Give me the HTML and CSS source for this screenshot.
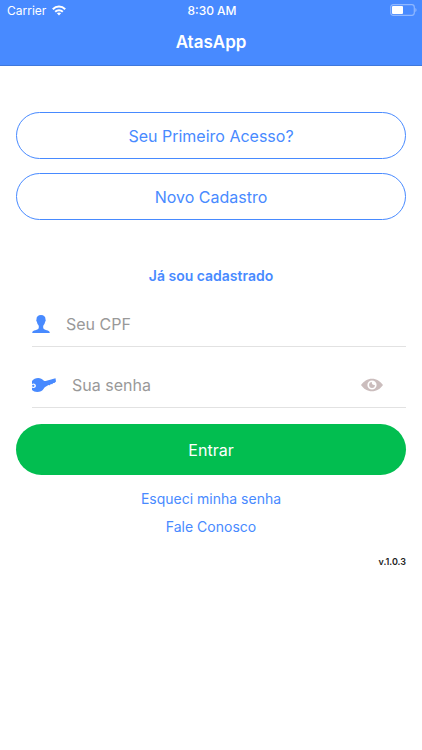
FILE: index.html
```html
<!DOCTYPE html>
<html lang="pt-BR">
<head>
  <meta charset="UTF-8">
  <meta name="viewport" content="width=device-width, initial-scale=1.0">
  <title>AtasApp</title>
  <link rel="stylesheet" href="styles.css">
</head>
<body>

  <header class="header">
    <!-- Status bar -->
    <div class="status-bar">
      <div class="carrier">
        <span>Carrier</span>
        <svg width="14" height="11" viewBox="0 0 14 11">
          <g fill="none" stroke="#fff" stroke-width="2">
            <path d="M0.8 4.3C4.3 0.7 9.7 0.7 13.2 4.3"/>
            <path d="M3.2 6.8C5.3 4.7 8.7 4.7 10.8 6.8"/>
          </g>
          <path fill="#fff" d="M4.9 8.3C6 7.3 8 7.3 9.1 8.3L7 10.4Z"/>
        </svg>
      </div>
      <span class="time">8:30 AM</span>
      <div class="battery">
        <svg width="27" height="12" viewBox="0 0 27 12">
          <rect x="0.7" y="0.7" width="23.6" height="10.6" rx="2.5" fill="none" stroke="#8fb7ff" stroke-width="1.2"/>
          <rect x="2" y="2" width="11" height="8" rx="1" fill="#fff"/>
          <path d="M25.3 4C27 4.6 27 7.4 25.3 8Z" fill="#8fb7ff"/>
        </svg>
      </div>
    </div>
    <h1>AtasApp</h1>
  </header>

  <main class="content">
    <div class="access">
      <button type="button" class="btn btn-outline">Seu Primeiro Acesso?</button>
      <button type="button" class="btn btn-outline">Novo Cadastro</button>
    </div>

    <!-- Login Form -->
    <form id="login-form">
      <h2>Já sou cadastrado</h2>
      <div class="field">
        <label for="cpf" aria-label="Seu CPF">
          <svg width="18" height="18" viewBox="0 0 18 18">
            <path fill="#488aff" d="M9 0C6.2 0 4.3 1.6 4.5 4.4C4.1 4.7 4.2 6.3 4.9 6.8C5.1 8.2 5.7 9.4 6.4 10.1C7 11.3 7 12.8 6.4 13.8C5.4 15.3 .8 15 .3 17.2V18H17.7V17.2C17.2 15 12.6 15.3 11.6 13.8C11 12.8 11 11.3 11.6 10.1C12.3 9.4 12.9 8.2 13.1 6.8C13.8 6.3 13.9 4.7 13.5 4.4C13.7 1.6 11.8 0 9 0Z"/>
          </svg>
        </label>
        <input type="text" id="cpf" placeholder="Seu CPF">
      </div>
      <div class="field">
        <label for="senha" aria-label="Sua senha">
          <svg width="24" height="14" viewBox="0 0 24 14">
            <path fill="#488aff" fill-rule="evenodd" d="M0 3C1.4 1 3.7 0 6.2 0C8.4 0 10.2 1 11.6 2.4C12.5 3.2 13.6 3 14.5 2.7L23.5 .2L24 3.6L22.4 5.1L21.3 4.9L20.1 6.2L18.9 5.9L17.8 7.2L16.5 7.1L14 8.6C12.7 9.3 12.3 9.9 11.7 10.8C10.3 13 8 14 5.2 14C3.1 14 1.2 13.3 0 12ZM0 6.1V9.5C1.5 10.8 3.9 9.8 3.9 7.8C3.9 5.8 1.5 4.8 0 6.1ZM.2 7.1C1.1 6.2 2.5 6.7 2.5 7.8C2.5 8.9 1.1 9.4 .2 8.5Z"/>
          </svg>
        </label>
        <input type="password" id="senha" placeholder="Sua senha">
        <button type="button" class="toggle" aria-label="Mostrar senha">
          <svg width="22" height="14" viewBox="0 0 22 14">
            <path fill="#cbbdbd" fill-rule="evenodd" d="M0 7C2.6 3.2 6.4 .7 11 .7C15.6 .7 19.4 3.2 22 7C19.4 10.8 15.6 13.3 11 13.3C6.4 13.3 2.6 10.8 0 7ZM11 2.4A4.6 4.6 0 1 0 11 11.6A4.6 4.6 0 1 0 11 2.4Z"/>
            <path fill="#cbbdbd" d="M11 4.1C10.4 5.6 11.3 7.2 13.9 7A2.9 2.9 0 1 1 11 4.1Z"/>
          </svg>
        </button>
      </div>
      <button type="submit" class="btn btn-enter">Entrar</button>
    </form>

    <nav class="links">
      <a href="#senha">Esqueci minha senha</a>
      <a href="#contato">Fale Conosco</a>
    </nav>
    <p class="version">v.1.0.3</p>
  </main>

</body>
</html>
```

FILE: styles.css
```css
* { box-sizing: border-box; margin: 0; padding: 0; }

body {
  font-family: Inter, 'Helvetica Neue', Helvetica, Arial, sans-serif;
  background: #fff;
  color: #488aff;
}

svg { display: block; }

/* Header */
.header {
  background: #488aff;
  color: #fff;
  border-bottom: 1px solid #3f78dc;
  text-align: center;
}

.status-bar {
  display: grid;
  grid-template-columns: 1fr auto 1fr;
  align-items: center;
  height: 20px;
  padding: 0 5px 0 7px;
  font-size: 12px;
}

.carrier { display: flex; align-items: center; gap: 6px; }
.time { font-weight: 500; }
.battery { justify-self: end; }

h1 { font-size: 17px; font-weight: 600; line-height: 45px; }

/* Buttons */
.content { padding: 46px 16px 16px; }

.access { display: grid; gap: 14px; }

.btn {
  width: 100%;
  border: none;
  border-radius: 26px;
  font-family: inherit;
  font-size: 16px;
  cursor: pointer;
}

.btn-outline {
  height: 47px;
  background: transparent;
  border: 1px solid #488aff;
  color: #488aff;
}

.btn-enter {
  height: 51px;
  margin-top: 16px;
  background: #02be50;
  color: #fff;
}

/* Login Form */
h2 {
  margin-top: 46px;
  font-size: 14px;
  font-weight: 600;
  line-height: 20px;
  text-align: center;
}

.field {
  display: flex;
  align-items: center;
  gap: 16px;
  height: 61px;
  margin-left: 16px;
  padding-top: 16px;
  border-bottom: 1px solid #e2e2e2;
}

.field input {
  flex: 1;
  min-width: 0;
  border: none;
  outline: none;
  background: none;
  font-family: inherit;
  font-size: 16px;
  color: #000;
}

.field input::placeholder { color: #999; opacity: 1; }

.toggle {
  margin-right: 23px;
  border: none;
  background: none;
  cursor: pointer;
}

/* Footer */
.links {
  display: grid;
  justify-items: center;
  gap: 8px;
  margin-top: 14px;
}

.links a {
  color: #488aff;
  font-size: 14px;
  line-height: 20px;
  text-decoration: none;
}

.version {
  margin-top: 19px;
  color: #222;
  font-size: 9px;
  font-weight: 600;
  line-height: 12px;
  text-align: right;
}
```
